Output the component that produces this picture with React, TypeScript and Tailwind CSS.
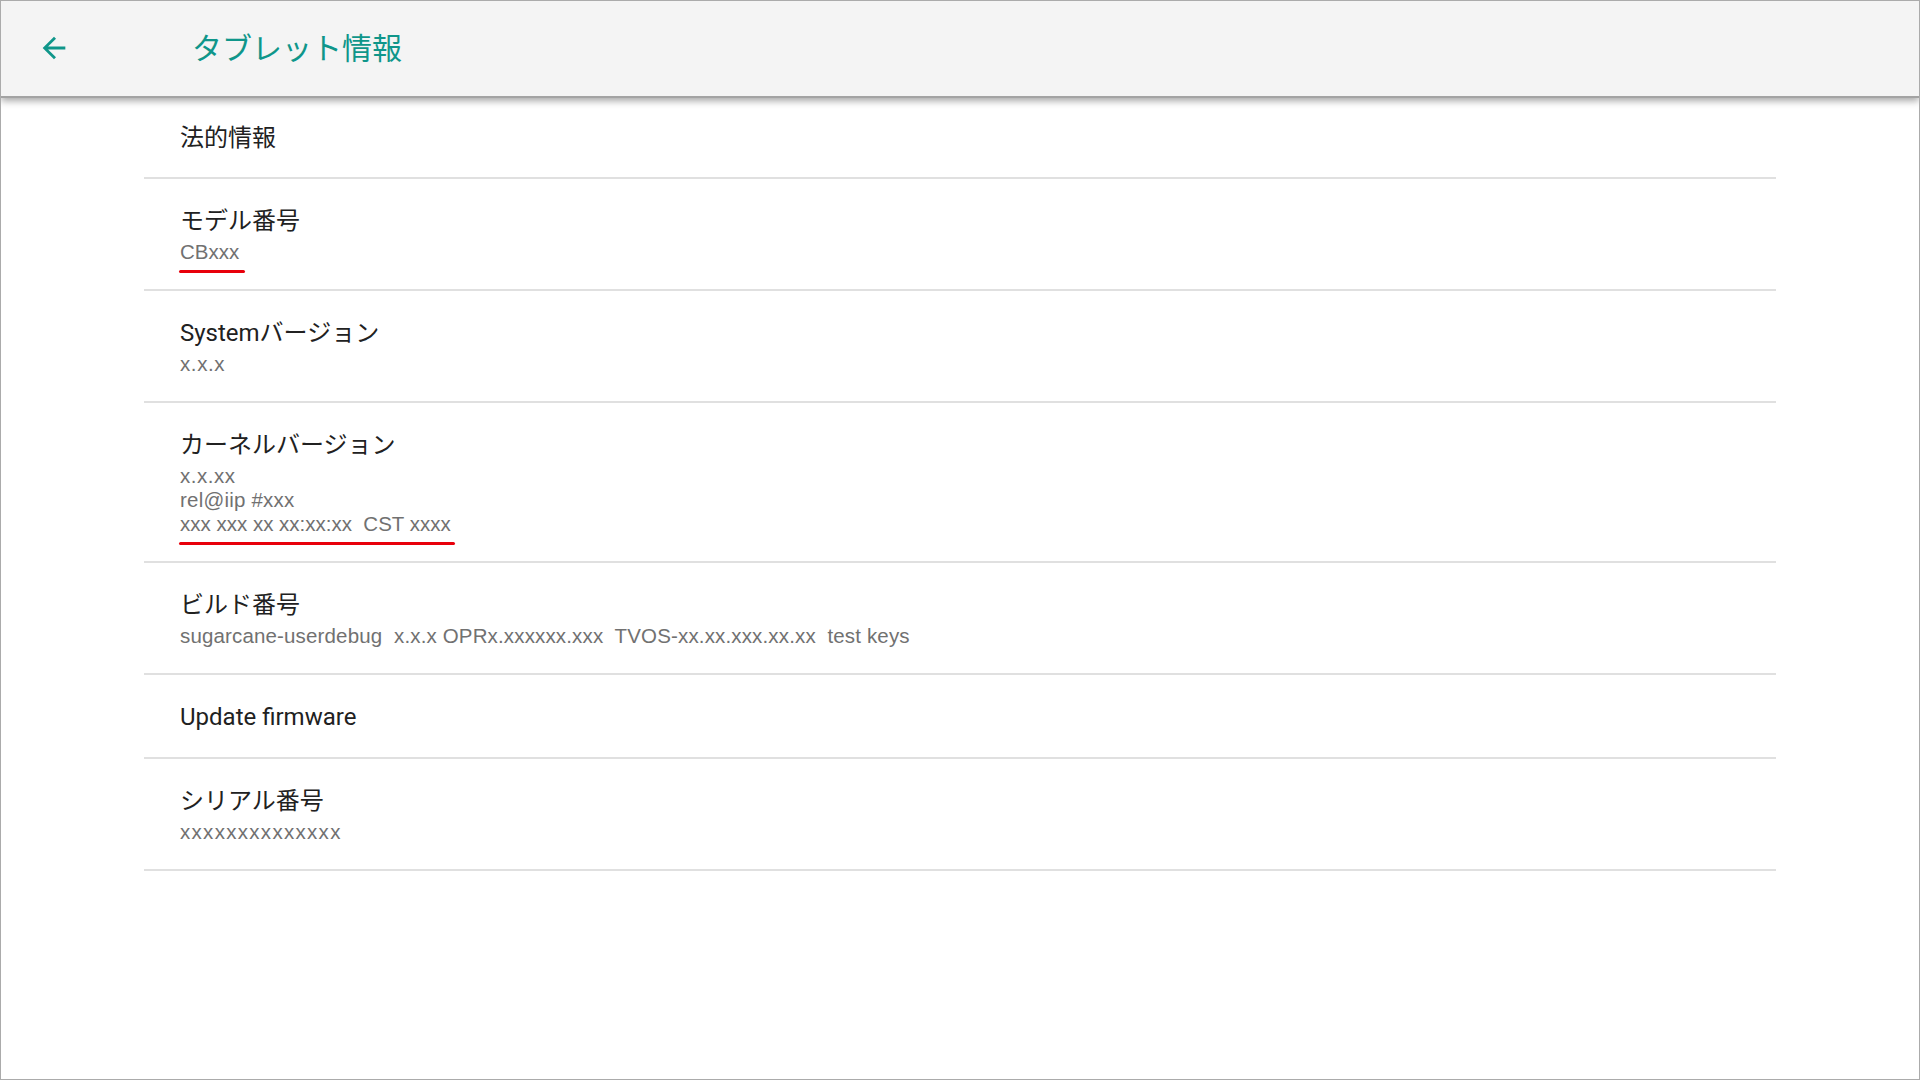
import React from "react";

const titleFont = { fontFamily: 'Roboto, "Noto Sans CJK JP", sans-serif' };
const subFont = { fontFamily: '"Liberation Sans", Arial, "Noto Sans CJK JP", sans-serif' };

type Line = { text: string; mark?: number; track?: string };
type Row = {
  title: string;
  lines?: Line[];
  first?: boolean;
};

const rows: Row[] = [
  { title: "法的情報", first: true },
  { title: "モデル番号", lines: [{ text: "CBxxx", mark: 66 }] },
  { title: "Systemバージョン", lines: [{ text: "x.x.x", track: "tracking-[0.6px]" }] },
  {
    title: "カーネルバージョン",
    lines: [
      { text: "x.x.xx", track: "tracking-[0.5px]" },
      { text: "rel@iip #xxx", track: "tracking-[0.2px]" },
      { text: "xxx xxx xx xx:xx:xx  CST xxxx", mark: 276 },
    ],
  },
  {
    title: "ビルド番号",
    lines: [
      {
        text: "sugarcane-userdebug  x.x.x OPRx.xxxxxx.xxx  TVOS-xx.xx.xxx.xx.xx  test keys",
        track: "tracking-[0.15px]",
      },
    ],
  },
  { title: "Update firmware" },
  { title: "シリアル番号", lines: [{ text: "xxxxxxxxxxxxxx", track: "tracking-[1.3px]" }] },
];

function ListRow({ row }: { row: Row }) {
  const pad = row.first
    ? "pl-[36px] pt-[24px] pb-[23px]"
    : row.lines
    ? "pl-[36px] pt-[26px] pb-[25px]"
    : "pl-[36px] pt-[26px] pb-[24px]";
  return (
    <div className="mx-[143px] border-b-2 border-[#e0e0e0]">
      <div className={pad}>
        <div className="text-[24px] leading-[32px] text-[#212121]" style={titleFont}>
          {row.title}
        </div>
        {row.lines && (
          <div className="mt-[3px]">
            {row.lines.map((l, i) => (
              <div
                key={i}
                className={`text-[20.5px] leading-[24px] text-[#717171] whitespace-pre ${l.track ?? ""}`}
                style={subFont}
              >
                <span className="relative inline-block">
                  {l.text}
                  {l.mark ? (
                    <span
                      className="absolute left-[-1px] top-[30px] h-[3px] rounded-full bg-[#e8000b]"
                      style={{ width: l.mark }}
                    />
                  ) : null}
                </span>
              </div>
            ))}
          </div>
        )}
      </div>
    </div>
  );
}

export default function App() {
  return (
    <div className="w-[1920px] h-[1080px] border border-[#ababab] bg-white flex flex-col overflow-hidden">
      <div className="relative z-10 h-[97px] shrink-0 bg-[#f4f4f4] border-b-2 border-[#a3a3a3] shadow-[0_3px_7px_rgba(0,0,0,0.35)] flex items-center pl-[36px] pb-[2px]">
        <svg width="34" height="34" viewBox="0 0 24 24" fill="#0f968a">
          <path d="M20 11H7.83l5.59-5.59L12 4l-8 8 8 8 1.41-1.41L7.83 13H20v-2z" />
        </svg>
        <div
          className="ml-[121px] mb-[3px] text-[30px] leading-[40px] text-[#0f968a]"
          style={{ fontFamily: '"Noto Sans CJK JP", sans-serif' }}
        >
          タブレット情報
        </div>
      </div>
      <div className="flex flex-col">
        {rows.map((r, i) => (
          <ListRow key={i} row={r} />
        ))}
      </div>
    </div>
  );
}
